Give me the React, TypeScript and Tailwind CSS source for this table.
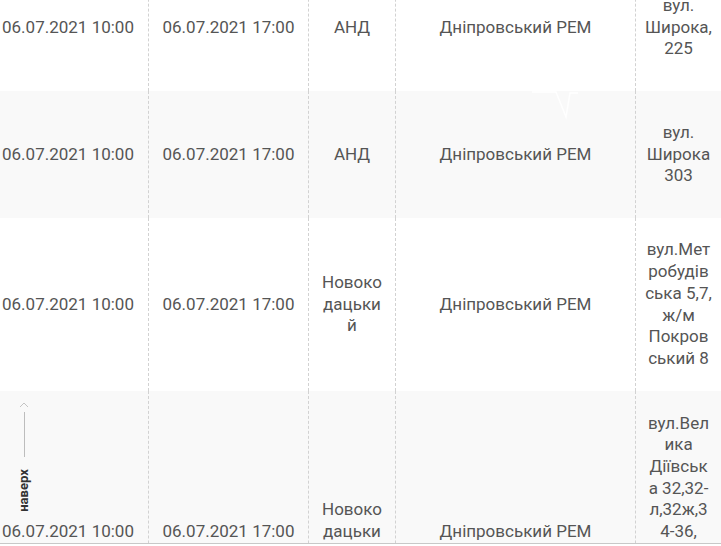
import React from "react";

type Row = {
  start: string;
  end: string;
  area: string;
  rem: string;
  address: string;
  h: string;
  bg: string;
};

const rows: Row[] = [
  {
    start: "06.07.2021 10:00",
    end: "06.07.2021 17:00",
    area: "АНД",
    rem: "Дніпровський РЕМ",
    address: "вул. Широка, 225",
    h: "h-[127px]",
    bg: "bg-white",
  },
  {
    start: "06.07.2021 10:00",
    end: "06.07.2021 17:00",
    area: "АНД",
    rem: "Дніпровський РЕМ",
    address: "вул. Широка 303",
    h: "h-[127px]",
    bg: "bg-[#f9f9f9]",
  },
  {
    start: "06.07.2021 10:00",
    end: "06.07.2021 17:00",
    area: "Новокодацький",
    rem: "Дніпровський РЕМ",
    address: "вул.Метробудівська 5,7, ж/м Покровський 8",
    h: "h-[173px]",
    bg: "bg-white",
  },
  {
    start: "06.07.2021 10:00",
    end: "06.07.2021 17:00",
    area: "Новокодацький",
    rem: "Дніпровський РЕМ",
    address: "вул.Велика Діївська 32,32-л,32ж,34-36, 38,40, 42,44, 46,48, 50,52, 54",
    h: "h-[282px]",
    bg: "bg-[#f9f9f9]",
  },
];

function Cell({ children, first, pad }: { children: React.ReactNode; first?: boolean; pad?: string }) {
  return (
    <div
      className={`flex items-center justify-center text-center break-words min-w-0 ${pad ?? "px-[10px]"} ${
        first ? "" : "border-l border-dashed border-[#d2d2d2]"
      }`}
    >
      <div className="w-full">{children}</div>
    </div>
  );
}

export default function App() {
  return (
    <div
      className="relative w-[721px] h-[546px] overflow-hidden bg-white text-[17px] leading-[21.7px] text-[#555]"
      style={{ fontFamily: "Roboto, 'Noto Sans', sans-serif" }}
    >
      <div className="-mt-[36px] -ml-[12px] w-[734px] flex flex-col">
        {rows.map((r, i) => (
          <div key={i} className={`grid grid-cols-[160px_160px_87px_240px_87px] shrink-0 ${r.h} ${r.bg}`}>
            <Cell first>{r.start}</Cell>
            <Cell>{r.end}</Cell>
            <Cell>{r.area}</Cell>
            <Cell>{r.rem}</Cell>
            <Cell pad="pl-[9px] pr-[10px]">{r.address}</Cell>
          </div>
        ))}
      </div>

      {/* faint decoration */}
      <svg className="absolute left-[530px] top-[91px]" width="50" height="30" viewBox="0 0 50 30">
        <path d="M2 1 H26 L36 26 L40 2 H48" fill="none" stroke="#ffffff" strokeWidth="1.5" />
      </svg>

      {/* back to top */}
      <div className="absolute left-[13px] top-[402px] flex flex-col items-center w-[20px]">
        <svg width="10" height="6" viewBox="0 0 10 6" className="ml-[2px]">
          <path d="M1 5 L5 1 L9 5" fill="none" stroke="#c4c4c4" strokeWidth="1" />
        </svg>
        <div className="w-px h-[45px] bg-[#bdbdbd] mt-[4px] ml-[2px]" />
        <div className="mt-[9px] h-[48px] flex items-center justify-center">
          <span className="-rotate-90 block text-[13px] font-bold text-[#333] leading-none whitespace-nowrap">
            наверх
          </span>
        </div>
      </div>

      {/* bottom edge */}
      <div className="absolute left-0 right-0 bottom-0 h-[3px] bg-white border-t border-[#c8c8c8]" />
    </div>
  );
}
